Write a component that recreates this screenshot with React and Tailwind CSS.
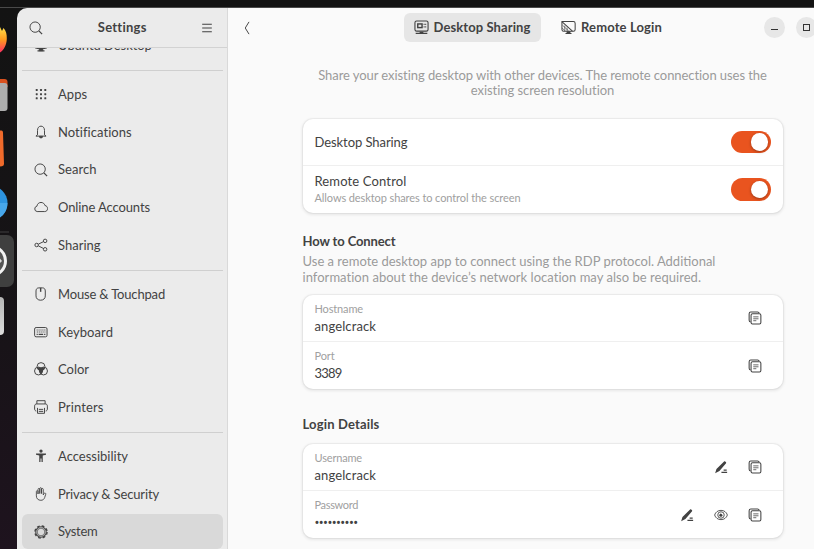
import React from "react";

function Svg({ className = "size-[14px]", children, sw = 1.1 }) {
  return (
    <svg viewBox="0 0 16 16" className={className + " shrink-0"} fill="none" stroke="currentColor" strokeWidth={sw}>
      {children}
    </svg>
  );
}

const SearchIcon = () => (
  <Svg>
    <circle cx="7" cy="7" r="5.9" />
    <path d="M11.3 11.3 15 15" strokeWidth="1.5" />
  </Svg>
);
const MonitorIcon = () => (
  <Svg>
    <rect x="1" y="1.5" width="14" height="10.5" rx="2" />
    <path d="M6 12h4v2.5H6z" fill="currentColor" />
    <path d="M4 14.8h8" strokeWidth="1.4" />
  </Svg>
);
const AppsIcon = () => (
  <Svg>
    <g fill="currentColor" stroke="none">
      {[2.4, 7.1, 11.8].map((y) =>
        [2, 6.9, 11.8].map((x) => <rect key={x + "-" + y} x={x} y={y} width="2.2" height="2.2" rx=".4" />)
      )}
    </g>
  </Svg>
);
const BellIcon = () => (
  <Svg>
    <path d="M4 11.3V6.2C4 3.2 5.7 1.3 8 1.3s4 1.9 4 4.9v5.1l1.8 1.4H2.2L4 11.3Z" strokeLinejoin="round" />
    <path d="M6.2 13h3.6a1.8 1.8 0 0 1-3.6 0Z" fill="currentColor" />
  </Svg>
);
const CloudIcon = () => (
  <Svg>
    <path d="M3.6 13.2a3.1 3.1 0 0 1-.3-6.1C3.7 4.5 5.6 2.8 8 2.8c2.3 0 3.9 1.3 4.500 3.500 1.900.3 3 1.700 3 3.500 0 2-1.300 3.400-3.300 3.400Z" />
  </Svg>
);
const ShareIcon = () => (
  <Svg>
    <circle cx="3" cy="8" r="2" />
    <circle cx="12.7" cy="3.3" r="2" />
    <circle cx="12.7" cy="12.9" r="2" />
    <path d="m5 7 5.800-2.800M5 9l5.900 3" />
  </Svg>
);
const MouseIcon = () => (
  <Svg>
    <path d="M5.500 1h4.200c2.100 0 3.200 1.500 3.200 3.500v5.700c0 2.900-2.100 4.900-5.300 4.900s-5.300-2-5.300-4.900V4.500C2.300 2.500 3.400 1 5.500 1Z" />
    <path d="M7.600 1v4.500" strokeWidth="1.6" />
  </Svg>
);
const KeyboardIcon = () => (
  <Svg>
    <rect x="0.7" y="2.9" width="14.2" height="10.6" rx="1.7" />
    <path d="M3 5.800h10.200M3.200 8.100h9.800" strokeWidth="1.2" strokeDasharray="1.2 1" />
    <path d="M3 10.700h1.300M5.300 10.700h5.200M11.600 10.700h1.400" strokeWidth="1.2" />
  </Svg>
);
const ColorIcon = () => (
  <Svg>
    <circle cx="8" cy="5.2" r="4.5" />
    <circle cx="5.1" cy="10.3" r="4.5" />
    <circle cx="10.9" cy="10.3" r="4.5" />
    <path d="M3.600 6.300C5 5.600 6.700 5.800 8 6.800c1.300-1 3-1.200 4.400-.5-.2 1.500-1.100 2.700-2.100 3.200 0 1.800-.9 3.400-2.300 4.200-1.400-.8-2.300-2.400-2.300-4.200-1-.5-1.900-1.700-2.100-3.200Z" fill="currentColor" stroke="none" />
  </Svg>
);
const PrinterIcon = () => (
  <Svg>
    <path d="M3.300 4.500V.8h9.400v3.700M2.600 12.600C1.400 12.400.7 11.500.7 10.300V7c0-1.600.9-2.500 2.400-2.500h9.800c1.500 0 2.400.9 2.400 2.500v3.300c0 1.200-.7 2.100-1.900 2.300" />
    <path d="M4 9v6.200h8V9M5.500 10.700h5M5.500 13h5" />
  </Svg>
);
const AccessIcon = () => (
  <Svg>
    <g fill="currentColor" stroke="none">
      <circle cx="8" cy="2.4" r="1.9" />
      <path d="M2.300 5h11.400v1.500L10 7.300v7.500H8.600v-4H7.400v4H6V7.300l-3.700-.8Z" />
    </g>
  </Svg>
);
const HandIcon = () => (
  <Svg sw={1}>
    <path d="M2.700 10.200V5.200c0-1.400 1.900-1.400 1.900 0V8 2.700c0-1.500 2-1.500 2 0V7.500 1.900c0-1.500 2-1.500 2 0V7.500 2.700c0-1.400 2-1.400 2 0V9l.9-1.500c.8-1.200 2.200-.6 1.900.8l-1.200 3.700c-.7 2-2 3.200-4.300 3.200-3.200 0-5.200-2-5.200-5Z" strokeLinejoin="round" />
  </Svg>
);
const GearIcon = () => (
  <Svg>
    <circle cx="8" cy="8" r="6.9" strokeWidth="1.6" strokeDasharray="3.1 2.32" />
    <circle cx="8" cy="8" r="6" strokeWidth="1.2" />
    <circle cx="8" cy="8" r="4.4" strokeWidth=".8" />
  </Svg>
);
const ShareScreenIcon = () => (
  <Svg className="size-[15px]" sw={1.2}>
    <rect x="1" y="1" width="14" height="10.8" rx="1.8" />
    <rect x="4" y="4.2" width="4.6" height="3.9" strokeWidth="1.5" />
    <path d="M10.300 4.600h1M12 4.600h1M10.300 7.300h1M12 7.300h1" strokeWidth="1.3" />
    <path d="M1.800 14.300h12.400" strokeWidth="1.5" />
    <path d="M6 12.400h4v1.500H6z" fill="currentColor" stroke="none" />
  </Svg>
);
const RemoteIcon = () => (
  <Svg className="size-[15px]" sw={1.1}>
    <path d="M1 1.700h12.200c1.200 0 1.900.7 1.900 1.900v6.600c0 1.200-.7 1.900-1.900 1.900H2.900c-1.200 0-1.900-.7-1.900-1.900Z" />
    <path d="M1.200 2l11 9.800" />
    <path d="M1.500 5.500l6.500 6M4 6v5.500M1.200 8.500l3 3M6.500 8v3.500" strokeWidth=".7" />
    <path d="M6 12h4v1.500l2 1.500H4l2-1.500Z" fill="currentColor" stroke="none" />
  </Svg>
);
const CopyIcon = () => (
  <Svg sw={1.2}>
    <path d="M2.900 12.600C1.900 12.400 1.300 11.700 1.300 10.700V3c0-1.200.7-1.900 1.900-1.900h7.700c1 0 1.700.5 1.900 1.400" />
    <rect x="3.5" y="3.2" width="11.2" height="11.6" rx="1.6" />
    <path d="M6 6.700h6M6 8.900h6M6 11.100h3.500" strokeWidth=".9" />
  </Svg>
);
const PenIcon = () => (
  <Svg>
    <path d="M11.500 1.700c.8-.8 3.100 1 2.300 2l-7.600 8.900L1.300 15l1.500-4.700Z" fill="currentColor" stroke="none" />
    <path d="M11 11.500h3.500M8.500 14.200h6.500" strokeWidth="1.3" />
  </Svg>
);
const EyeIcon = () => (
  <Svg sw={1}>
    <path d="M.7 8C1.700 4.700 4.500 2.700 8 2.700S14.300 4.700 15.300 8c-1 3.300-3.800 5.300-7.300 5.300S1.700 11.300.7 8Z" />
    <circle cx="8" cy="8" r="3.7" />
    <circle cx="7.9" cy="8.2" r="1.8" fill="currentColor" stroke="none" />
    <path d="M8 6l2 1.500" stroke="#fff" strokeWidth=".8" />
  </Svg>
);

function Item({ icon, label, track, active }) {
  return (
    <div className={"mb-[2.2px] flex h-[35.5px] items-center gap-[10px] rounded-[6px] pl-3 " + (active ? "bg-[#d9d9d9]" : "")}>
      {icon}
      <span className={"pt-px whitespace-nowrap " + track}>{label}</span>
    </div>
  );
}

const Separator = () => (
  <div className="flex h-[11.3px] items-center pb-[0.7px]">
    <div className="h-px w-full bg-[#cfcfcf]" />
  </div>
);

function Dock() {
  return (
    <div className="flex w-[17px] shrink-0 flex-col overflow-hidden bg-linear-to-b from-[#131313] via-[#161316] to-[#1e131e]">
      <svg className="mt-[19px] h-[28px] w-[7px] shrink-0" viewBox="0 0 7 28">
        <defs>
          <linearGradient id="fox" x1="0" y1="0" x2="0" y2="1">
            <stop offset="0" stopColor="#ffe14a" />
            <stop offset=".5" stopColor="#ff9a1f" />
            <stop offset="1" stopColor="#ff2f62" />
          </linearGradient>
        </defs>
        <path d="M0 0 2 4 3.500 1c2.600 3 3.400 6 3.300 11C6.500 18 4 23 0 25.500Z" fill="url(#fox)" />
      </svg>
      <svg className="mt-[24px] h-[33px] w-[8px] shrink-0" viewBox="0 0 8 33">
        <path d="M0 0h4.500q3 0 3 3v5H0Z" fill="#d9511f" />
        <path d="M0 4h4.500q3 0 3 3v22q0 3-3 3H0Z" fill="#adadad" />
      </svg>
      <svg className="mt-[18px] h-[38px] w-[5px] shrink-0" viewBox="0 0 5 38">
        <path d="M0 .5h1.500q1.400 0 1.500 2L4 34q0 2-2 2.200L0 36.500Z" fill="#f06a2b" />
      </svg>
      <svg className="mt-[18px] h-[36px] w-[8px] shrink-0" viewBox="0 0 8 36">
        <circle cx="-10" cy="17" r="17.5" fill="#2d93df" />
        <path d="M0 17h7.500A17.500 17.500 0 0 1 0 31.500Z" fill="#47a6ea" />
      </svg>
      <div className="mt-[9px] h-[2px] w-[9px] shrink-0 bg-[#2b292b]" />
      <div className="mt-[2px] flex h-[52px] w-[14px] shrink-0 items-center rounded-r-[7px] bg-[#3f3f3f]">
        <svg className="h-[38px] w-[10px]" viewBox="0 0 10 38">
          <circle cx="-9" cy="19" r="14.5" fill="#555" stroke="#f2f2f2" strokeWidth="3" />
          <path d="M0 16.500 2 19l-2 2Z" fill="#ddd" />
        </svg>
      </div>
      <div className="mt-[10px] h-[38px] w-[4px] shrink-0 rounded-r-[4px] bg-linear-to-b from-[#b5b5b5] to-[#dcdcdc]" />
    </div>
  );
}

function Sidebar() {
  return (
    <div className="flex w-[210.500px] shrink-0 flex-col overflow-hidden border-r border-[#d9d9d9] bg-[#ebebeb]">
      <div className="flex h-10 shrink-0 items-center justify-between border-b border-[#d2d2d2] pr-3 pl-3">
        <SearchIcon />
        <span className="pl-px font-bold tracking-[0.256px]">Settings</span>
        <Svg sw={1.2}>
          <path d="M2.500 3.700h11M2.500 8h11M2.500 12.300h11" />
        </Svg>
      </div>
      <div className="min-h-0 flex-1 overflow-hidden pr-1 pl-[5px]">
        <div className="-mt-[20.400px]">
          <Item icon={<MonitorIcon />} label="Ubuntu Desktop" track="tracking-[-0.050px]" />
          <Separator />
          <Item icon={<AppsIcon />} label="Apps" track="tracking-[0.079px]" />
          <Item icon={<BellIcon />} label="Notifications" track="tracking-[0.055px]" />
          <Item icon={<SearchIcon />} label="Search" track="tracking-[0.039px]" />
          <Item icon={<CloudIcon />} label="Online Accounts" track="tracking-[-0.107px]" />
          <Item icon={<ShareIcon />} label="Sharing" track="tracking-normal" />
          <Separator />
          <Item icon={<MouseIcon />} label="Mouse & Touchpad" track="tracking-[-0.169px]" />
          <Item icon={<KeyboardIcon />} label="Keyboard" track="tracking-[0.076px]" />
          <Item icon={<ColorIcon />} label="Color" track="tracking-normal" />
          <Item icon={<PrinterIcon />} label="Printers" track="tracking-[0.123px]" />
          <Separator />
          <Item icon={<AccessIcon />} label="Accessibility" track="tracking-normal" />
          <Item icon={<HandIcon />} label="Privacy & Security" track="tracking-[-0.146px]" />
          <Item icon={<GearIcon />} label="System" track="tracking-[-0.271px]" active />
        </div>
      </div>
    </div>
  );
}

const Card = ({ children }) => (
  <div className="h-[94px] divide-y divide-[#efefef] rounded-[10px] bg-white shadow-[0_0_0_1px_rgba(0,0,0,0.035),0_1px_3px_1px_rgba(0,0,0,0.08)]">
    {children}
  </div>
);

const Toggle = () => (
  <div className="flex h-[22.500px] w-10 items-center justify-end rounded-full bg-[#e9541f] pr-[2.500px]">
    <div className="size-[17.500px] rounded-full bg-white shadow-[0_1px_3px_rgba(0,0,0,0.35)]" />
  </div>
);

function Field({ label, labelTrack, value, valueClass, icons }) {
  return (
    <div className="flex h-[47px] justify-between pr-[10px] pl-3">
      <div className="pt-[7px]">
        <div className={"text-[11px] leading-[14px] text-[#a0a0a0] " + labelTrack}>{label}</div>
        <div className={"mt-px leading-[18px] " + valueClass}>{value}</div>
      </div>
      <div className="flex items-center">
        {icons.map((icon, i) => (
          <div key={i} className="flex w-[34.400px] justify-center">{icon}</div>
        ))}
      </div>
    </div>
  );
}

const WindowButton = ({ children }) => (
  <div className="flex size-[21px] shrink-0 items-center justify-center rounded-full bg-[#e7e7e7]">{children}</div>
);

function Main() {
  return (
    <div className="min-w-0 flex-1 overflow-hidden bg-[#fafafa]">
      <div className="flex h-[39px] items-center pl-[12px]">
        <Svg sw={1.1}>
          <path d="M10.300 1 6 8l4.300 7" />
        </Svg>
        <div className="ml-[150.500px] flex h-[29px] w-[137px] shrink-0 items-center gap-[5px] rounded-[6px] bg-[#e6e6e6] pl-[9.500px] font-bold">
          <ShareScreenIcon />
          <span className="whitespace-nowrap tracking-[0.098px]">Desktop Sharing</span>
        </div>
        <div className="ml-[20px] flex shrink-0 items-center gap-[5px] font-bold">
          <RemoteIcon />
          <span className="whitespace-nowrap tracking-[0.141px]">Remote Login</span>
        </div>
        <div className="ml-[102px] flex shrink-0 gap-[10.500px]">
          <WindowButton>
            <div className="mt-[4px] h-px w-[7px] bg-[#333]" />
          </WindowButton>
          <WindowButton>
            <div className="size-[7px] border border-[#333]" />
          </WindowButton>
        </div>
      </div>

      <div className="ml-[75px] w-[480px] pt-[20.500px]">
        <div className="text-center leading-[15.500px] whitespace-nowrap text-[#9b9b9b]">
          <div className="tracking-[-0.069px]">Share your existing desktop with other devices. The remote connection uses the</div>
          <div className="tracking-[-0.048px]">existing screen resolution</div>
        </div>

        <div className="mt-[20.500px]">
          <Card>
            <div className="flex h-[47px] items-center justify-between px-3">
              <span className="pt-[2px] tracking-[-0.069px]">Desktop Sharing</span>
              <Toggle />
            </div>
            <div className="flex h-[47px] items-center justify-between px-3">
              <div className="pb-[2px]">
                <div className="leading-[18px] tracking-[0.142px]">Remote Control</div>
                <div className="text-[11px] leading-[15px] tracking-[-0.093px] text-[#a0a0a0]">Allows desktop shares to control the screen</div>
              </div>
              <Toggle />
            </div>
          </Card>
        </div>

        <div className="mt-[19px] leading-[18px] font-bold tracking-[-0.112px]">How to Connect</div>
        <div className="mt-[4px] leading-[15.500px] whitespace-nowrap text-[#9b9b9b]">
          <div>Use a remote desktop app to connect using the RDP protocol. Additional</div>
          <div className="tracking-[0.032px]">information about the device’s network location may also be required.</div>
        </div>

        <div className="mt-[10px]">
          <Card>
            <Field label="Hostname" labelTrack="tracking-[-0.143px]" value="angelcrack" valueClass="tracking-[0.108px]" icons={[<CopyIcon />]} />
            <Field label="Port" labelTrack="tracking-[-0.125px]" value="3389" valueClass="tracking-[-0.793px]" icons={[<CopyIcon />]} />
          </Card>
        </div>

        <div className="mt-[26px] leading-[18px] font-bold tracking-[0.165px]">Login Details</div>
        <div className="mt-[11px]">
          <Card>
            <Field label="Username" labelTrack="tracking-[-0.172px]" value="angelcrack" valueClass="tracking-[0.108px]" icons={[<PenIcon />, <CopyIcon />]} />
            <Field label="Password" labelTrack="tracking-[-0.336px]" value="••••••••••" valueClass="font-['Noto_Sans'] tracking-[-0.589px]" icons={[<PenIcon />, <EyeIcon />, <CopyIcon />]} />
          </Card>
        </div>
      </div>
    </div>
  );
}

export default function App() {
  return (
    <div className="flex h-[549px] w-[814px] flex-col overflow-hidden bg-[#131313] font-['Lato','Noto_Sans',sans-serif] text-[13px] text-[#424242]">
      <div className="h-2 shrink-0 border-b border-[#4a4a4a]" />
      <div className="flex min-h-0 flex-1">
        <Dock />
        <div className="flex min-w-0 flex-1 overflow-hidden rounded-tl-[10px]">
          <Sidebar />
          <Main />
        </div>
      </div>
    </div>
  );
}
